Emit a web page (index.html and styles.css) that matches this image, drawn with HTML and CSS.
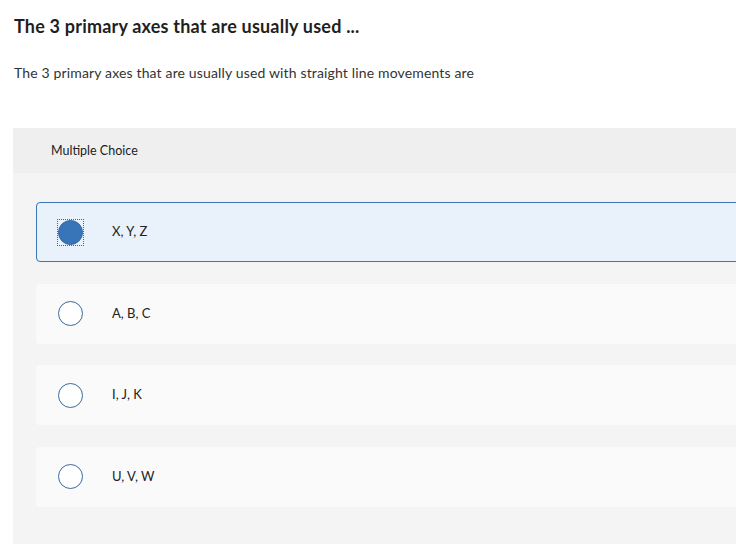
FILE: index.html
```html
<!DOCTYPE html>
<html>
<head>
    <meta charset="UTF-8">
    <title>Question</title>
    <link rel="stylesheet" href="styles.css">
</head>
<body>
    <div class="page">
        <h1 class="title">The 3 primary axes that are usually used ...</h1>
        <p class="prompt">The 3 primary axes that are usually used with straight line movements are</p>

        <div class="question">
            <div class="question-head">Multiple Choice</div>
            <div class="choices">
                <label class="choice selected">
                    <span class="radio-wrap"><span class="radio"></span></span>
                    <span class="choice-text">X, Y, Z</span>
                </label>
                <label class="choice">
                    <span class="radio-wrap"><span class="radio"></span></span>
                    <span class="choice-text">A, B, C</span>
                </label>
                <label class="choice">
                    <span class="radio-wrap"><span class="radio"></span></span>
                    <span class="choice-text">I, J, K</span>
                </label>
                <label class="choice">
                    <span class="radio-wrap"><span class="radio"></span></span>
                    <span class="choice-text">U, V, W</span>
                </label>
            </div>
        </div>
    </div>
</body>
</html>
```

FILE: styles.css
```css
body {
    margin: 0;
    font-family: Lato, "Open Sans", Arial, sans-serif;
    color: #222;
    background: #fff;
    overflow: hidden; /* content is wider than the window */
}

.page {
    width: 800px;
    padding-left: 13px;
}

.title {
    margin: 0;
    padding: 16px 0 0 1px;
    font-size: 18px;
    font-weight: 700;
    line-height: 20px;
    letter-spacing: 0.2px;
    color: #1f1f1f;
}

.prompt {
    margin: 0;
    padding: 28px 0 0 1px;
    font-size: 14px;
    line-height: 17px;
    letter-spacing: 0.15px;
    color: #333;
}

.question {
    margin-top: 47px;
    background: #f4f4f4;
    min-height: 420px;
}

.question-head {
    height: 45px;
    background: #efefef;
    display: flex;
    align-items: center;
    padding-left: 38px;
    font-size: 12.5px;
    color: #222;
}

.choices {
    display: flex;
    flex-direction: column;
    gap: 21.5px;
    padding: 29px 0 0 23px;
}

.choice {
    display: flex;
    align-items: center;
    height: 60px;
    box-sizing: border-box;
    background: #fafafa;
    border-radius: 4px;
    padding-left: 21px;
}

.choice.selected {
    background: #e9f1fb;
    border: 1px solid #3a75b6;
    padding-left: 20px;
}

/* square focus frame around the radio */
.radio-wrap {
    display: flex;
    border: 1px dotted transparent;
    flex-shrink: 0;
}

.selected .radio-wrap {
    border-color: #2a6ac0;
}

.radio {
    width: 25px;
    height: 25px;
    box-sizing: border-box;
    border: 1.5px solid #3a6a9c;
    border-radius: 50%;
    background: #fff;
}

.selected .radio {
    background: #3874b8;
    border-color: #3568a6;
}

.choice-text {
    margin-left: 28px;
    font-size: 13px;
    color: #222;
    padding-bottom: 2px;
}
```
